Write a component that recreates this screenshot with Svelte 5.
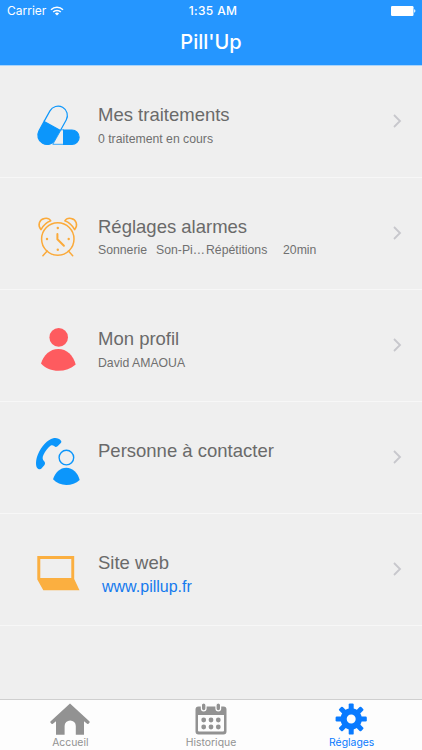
<script lang="ts">
	type Row = { icon: string; title: string; detail?: string; link?: string };

	const rows: Row[] = [
		{ icon: 'pills', title: 'Mes traitements', detail: '0 traitement en cours' },
		{ icon: 'alarm', title: 'Réglages alarmes' },
		{ icon: 'profile', title: 'Mon profil', detail: 'David AMAOUA' },
		{ icon: 'contact', title: 'Personne à contacter' },
		{ icon: 'laptop', title: 'Site web', link: 'www.pillup.fr' }
	];

	const tabs = [
		{ id: 'home', label: 'Accueil' },
		{ id: 'history', label: 'Historique' },
		{ id: 'settings', label: 'Réglages' }
	];

	let active = $state('settings');
</script>

<div class="screen">
	<header>
		<div class="status">
			<div class="carrier">
				<span>Carrier</span>
				<svg width="14" height="10" viewBox="0 0 14 10" fill="none" stroke="#fff" stroke-width="1.5">
					<path d="M1 3.8a8.5 8.5 0 0 1 12 0M3.2 6a5.4 5.4 0 0 1 7.6 0" />
					<path d="M7 9.6 4.9 7.5a3 3 0 0 1 4.2 0z" fill="#fff" stroke="none" />
				</svg>
			</div>
			<span class="time">1:35 AM</span>
			<svg class="battery" width="25" height="10" viewBox="0 0 25 10" fill="#fff">
				<rect width="22.5" height="10" rx="1.2" />
				<path d="M23.2 3.3c1.6.3 1.6 3.1 0 3.4z" />
			</svg>
		</div>
		<h1>Pill'Up</h1>
	</header>

	<main>
		{#each rows as row}
			<div class="row">
				<svg class="icon" width="50" height="50" viewBox="0 0 50 50">
					{#if row.icon === 'pills'}
						<g fill="none" stroke="#0c96fb" stroke-width="1.2">
							<g transform="rotate(29 18.6 25.3)">
								<path d="M9.3 26V14a9.3 9.3 0 0 1 18.6 0V26" />
								<path d="M9.3 26H27.9V36.6a9.3 9.3 0 0 1-18.6 0z" fill="#0c96fb" />
							</g>
							<path d="M27 29.8 18.8 44.3H29.6V29.8z" fill="#efefef" stroke-width=".8" />
							<path d="M29.6 30H37.9a7.2 7.2 0 0 1 0 14.4h-8.3z" fill="#0c96fb" />
						</g>
					{:else if row.icon === 'alarm'}
						<g fill="none" stroke="#fbaa3a" stroke-width="1.5" stroke-linecap="round" stroke-linejoin="round">
							<circle cx="23.8" cy="27" r="16.2" />
							<path d="M7 17.7C3.2 13 5.3 7.4 10.5 6.4c2.8-.5 5.2.6 6.3 2.4Q10.5 11 7 17.7z" />
							<path d="M40.6 17.7C44.4 13 42.3 7.4 37.1 6.4c-2.8-.5-5.2.6-6.3 2.4Q37.1 11 40.6 17.7z" />
							<path d="m13.2 39-4.3 4.7M34.4 39l4.3 4.7" />
							<path d="M23.4 22v5.2l6.5 6.5" stroke-width="2" />
						</g>
						<g fill="#fbaa3a">
							<circle cx="23.8" cy="16" r="1.2" />
							<circle cx="13" cy="27" r="1.2" />
							<circle cx="34.7" cy="27" r="1.2" />
							<circle cx="23.8" cy="37.8" r="1.2" />
						</g>
					{:else if row.icon === 'profile'}
						<g fill="#fe5b5f">
							<circle cx="24.7" cy="13.4" r="9.3" />
							<path d="M7 39.5C9.5 31 16 24.9 24.3 24.9S39.3 31 41.7 40.5C37 44.7 31 46.8 24.3 46.8S11.5 44.5 7 39.5z" />
						</g>
					{:else if row.icon === 'contact'}
						<g fill="#0c96fb">
							<path d="M27 4.7C25.5 2.4 22 1.7 19.2 2.3C13.5 3.7 7.5 10.5 4 18.2C1.7 23.5 1.4 29.5 3.2 31.9C4.3 33.4 6.7 33.6 7.7 32.2L10.5 28.9C11.6 27.3 10.9 25.8 9.9 24.9C8.4 23.4 8.2 21.6 9.4 19C11.4 14.9 14 11.8 16.8 9.6C18.6 8.6 19.7 9.7 21.2 10.8C22.2 11.3 23.4 10.7 24.3 9.6L26.8 6.9C27.5 6.2 27.5 5.4 27 4.7z" />
							<path d="M19 43.3C21 36.5 26 31.7 32.3 31.7S43.9 36.8 45.7 44C42 47.4 37.4 49 32.3 49S22.5 47.2 19 43.3z" />
						</g>
						<circle cx="32.4" cy="21.6" r="7.3" fill="none" stroke="#0c96fb" stroke-width="1.4" />
					{:else}
						<path d="M3.3 8H40.2V31L45.5 42.2H9.3L3.3 31.6zM6.3 11V29.9H37.3V11z" fill="#fbaf40" fill-rule="evenodd" />
					{/if}
				</svg>

				<div class="text">
					<h2>{row.title}</h2>
					{#if row.icon === 'alarm'}
						<p class="alarm-detail">
							<span class="sound-label">Sonnerie</span>
							<span class="sound">Son-Pi…</span>
							<span class="repeat-label">Répétitions</span>
							<span>20min</span>
						</p>
					{:else if row.detail}
						<p>{row.detail}</p>
					{:else if row.link}
						<a href="https://{row.link}">{row.link}</a>
					{/if}
				</div>

				<svg class="chevron" width="9" height="14" viewBox="0 0 9 14" fill="none" stroke="#c7c7cc" stroke-width="1.8">
					<path d="m1 1 6 6-6 6" />
				</svg>
			</div>
		{/each}
	</main>

	<nav>
		{#each tabs as tab}
			<button class:active={active === tab.id} onclick={() => (active = tab.id)}>
				<svg width="40" height="32" viewBox="0 0 40 32" fill="currentColor">
					{#if tab.id === 'home'}
						<path d="M20 .6 39.3 18.2a1 1 0 0 1 .1 1.5l-.9 1a1 1 0 0 1-1.4 0L34 18.2V31.7H25.8V23a5.6 5.6 0 0 0-11.2 0V31.7H6V18.2L2.9 20.7a1 1 0 0 1-1.4 0l-.9-1a1 1 0 0 1 .1-1.5z" />
					{:else if tab.id === 'history'}
						<path fill-rule="evenodd" d="M7.5 3.6h25a3 3 0 0 1 3 3V28.5a3 3 0 0 1-3 3h-25a3 3 0 0 1-3-3V6.6a3 3 0 0 1 3-3zM7 12V27.5a1 1 0 0 0 1 1H32a1 1 0 0 0 1-1V12z" />
						<g stroke="#fdfdfd" stroke-width="1.2">
							<rect x="10.4" y="0" width="4.6" height="7.8" rx="2.3" />
							<rect x="25" y="0" width="4.6" height="7.8" rx="2.3" />
						</g>
						{#each [17, 24] as y}
							{#each [12.7, 20, 27.3] as x}
								<circle cx={x} cy={y} r="2.4" />
							{/each}
						{/each}
					{:else}
						<circle cx="19.2" cy="16" r="7.6" fill="none" stroke="currentColor" stroke-width="6.2" />
						{#each [0, 45, 90, 135, 180, 225, 270, 315] as angle}
							<rect x="16.7" y=".4" width="5" height="8" rx="1.2" transform="rotate({angle} 19.2 16)" />
						{/each}
					{/if}
				</svg>
				<span>{tab.label}</span>
			</button>
		{/each}
	</nav>
</div>

<style>
	:global(body) {
		margin: 0;
	}

	.screen {
		display: flex;
		flex-direction: column;
		width: 422px;
		height: 750px;
		overflow: hidden;
		background: #efefef;
		font-family: 'Liberation Sans', Arial, sans-serif;
	}

	header {
		height: 66px;
		color: #fff;
		background: #2596ff;
		border-bottom: 1px solid #a9d4fb;
		box-sizing: border-box;
		font-family: Inter, sans-serif;
	}

	.status {
		display: grid;
		grid-template-columns: 1fr auto 1fr;
		align-items: center;
		height: 22px;
		padding: 0 6px 0 7px;
		font-size: 12px;
		line-height: 22px;
	}

	.carrier {
		display: flex;
		align-items: center;
		gap: 4px;
	}

	.time {
		padding-left: 3px;
		font-weight: 500;
		letter-spacing: 0.35px;
	}

	.battery {
		justify-self: end;
	}

	h1 {
		margin: 5px 0 0;
		font-size: 20px;
		font-weight: 500;
		line-height: 30px;
		text-align: center;
	}

	main {
		flex: 1;
	}

	.row {
		display: flex;
		height: 112px;
		padding: 0 20px 0 34px;
		border-bottom: 1px solid #f7f7f7;
		box-sizing: border-box;
	}

	.icon {
		flex: none;
		margin-top: 34px;
	}

	.text {
		flex: 1;
		padding: 35px 0 0 14px;
		color: #6a6a6a;
		white-space: nowrap;
	}

	h2 {
		margin: 0;
		font-size: 18.5px;
		font-weight: 400;
		line-height: 27px;
	}

	p {
		margin: 1px 0 0;
		color: #707070;
		font-size: 12.25px;
		line-height: 20px;
	}

	.alarm-detail {
		display: flex;
		margin-top: 0;
	}

	.sound-label {
		width: 58px;
	}

	.sound {
		width: 50px;
	}

	.repeat-label {
		width: 77px;
	}

	a {
		display: block;
		padding-left: 4px;
		color: #147aee;
		font-size: 16px;
		line-height: 21px;
		text-decoration: none;
	}

	.chevron {
		margin-top: 48px;
	}

	nav {
		display: flex;
		height: 51px;
		background: #fdfdfd;
		border-top: 1px solid #cfcfcf;
		box-sizing: border-box;
	}

	button {
		display: flex;
		flex: 1;
		flex-direction: column;
		align-items: center;
		padding: 3px 0 0;
		border: none;
		background: none;
		color: #929292;
		font: 400 10.4px/16px Inter, sans-serif;
	}

	button svg {
		flex: none;
	}

	.active {
		color: #087aff;
	}
</style>
